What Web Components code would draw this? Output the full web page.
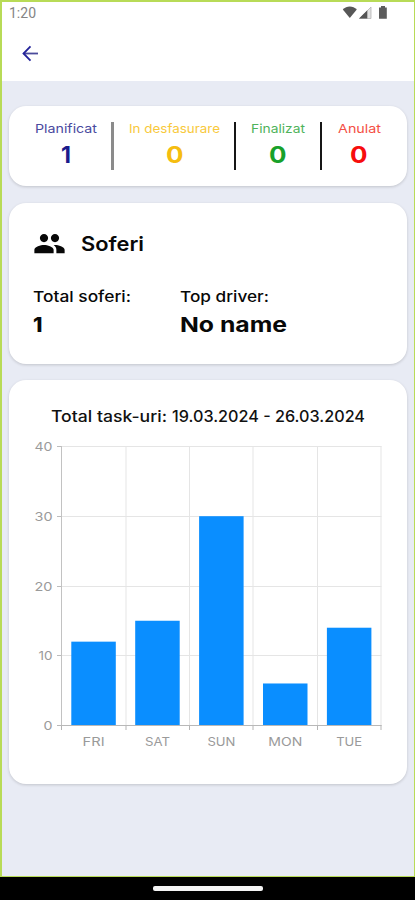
<!DOCTYPE html>
<html lang="ro">
<head>
<meta charset="utf-8">
<title>Soferi</title>
<style>
html,body{margin:0;padding:0;background:#000;font-family:Inter,"Open Sans",sans-serif}
</style>
</head>
<body>
<driver-app></driver-app>
<script>
const define = (name, html, ready) => {
  const template = document.createElement('template');
  template.innerHTML = html;
  customElements.define(name, class extends HTMLElement {
    constructor() {
      super();
      this.attachShadow({mode: 'open'}).append(template.content.cloneNode(true));
    }
    connectedCallback() { if (ready) ready(this, this.shadowRoot); }
  });
};

// One line of text set to a given width, with its baseline at a given height.
define('fit-text', `<style>
:host{display:block}
svg{display:block;overflow:visible}
</style><svg><text lengthAdjust="spacingAndGlyphs" fill="currentColor"></text></svg>`, (el, root) => {
  const svg = root.querySelector('svg'), t = root.querySelector('text');
  const w = el.getAttribute('w'), h = el.getAttribute('h');
  svg.setAttribute('width', w); svg.setAttribute('height', h);
  t.setAttribute('y', el.getAttribute('base') || h);
  t.setAttribute('textLength', w);
  t.setAttribute('font-size', el.getAttribute('size'));
  t.setAttribute('font-weight', el.getAttribute('weight') || 400);
  if (el.hasAttribute('font')) t.setAttribute('font-family', el.getAttribute('font'));
  t.textContent = el.getAttribute('text');
});

define('status-bar', `<style>
:host{display:flex;height:22px;padding:0 26px 0 7px;justify-content:space-between;color:#858585}
fit-text{margin-top:5px}
svg{display:block;margin-top:3px}
</style>
<fit-text text="1:20" w="27" h="12" base="11.3" size="14" font="Roboto, sans-serif"></fit-text>
<svg width="46" height="15" viewBox="0 0 46 15">
<path d="M.8 4.6C4.6.3 11 .3 14.8 4.6L7.8 13Z" fill="#575757"/>
<path d="M17.5 13.5 29 2v11.500Z" fill="#e2e2e2" stroke="#b4b4b4" stroke-width=".8"/>
<path d="M17 13.500 25.300 5.300v8.200Z" fill="#555"/>
<path d="M39 1h4v1.500h1.800v11.300h-7.800V2.500H39Z" fill="#5c5c5c"/>
</svg>`);

define('app-header', `<style>
:host{display:flex;flex-direction:column;height:79px;background:#fff}
nav{display:flex;align-items:center;height:57px;padding:1px 0 0 19px;box-sizing:border-box}
</style><status-bar></status-bar>
<nav><svg width="17" height="17" viewBox="0 0 17 17" fill="none" stroke-width="1.800"><path d="M2.500 8.500H17" stroke="#4b4b9c"/><path d="M9.500 1.400 2.500 8.500l7 7.100" stroke="#23239a"/></svg></nav>`);

define('ui-card', `<style>
:host{display:block;box-sizing:border-box;background:#fff;border-radius:17px;box-shadow:0 1px 3px #0000002b}
</style><slot></slot>`);

define('stat-item', `<style>
:host{display:flex;flex-direction:column;align-items:center;gap:11px}
</style><slot></slot>`);

define('stat-row', `<style>
:host{display:grid;grid-template-columns:105px 122px 86px 1fr;height:48px;padding-top:16px}
stat-item{padding-top:2.500px;box-sizing:border-box}
.line{border-right:2px solid #161616}
.a{color:#4a4aa0;border-right:3px solid #8b8b8b;padding-left:11px}
.b{color:#f8c93c;padding-left:1px}.c{color:#4fb35b}.d{color:#f44f45;padding-right:11px}
.n1{color:#1b1b8b}.n2{color:#f5bd10}.n3{color:#17a12b}.n4{color:#f70d0d}
</style>
<stat-item class="a"><fit-text text="Planificat" w="62" h="10" base="9.2" size="12"></fit-text><fit-text class="n1" text="1" w="10" h="18" base="17.500" size="23" weight="700"></fit-text></stat-item>
<stat-item class="b line"><fit-text text="In desfasurare" w="91" h="10" base="9.2" size="12"></fit-text><fit-text class="n2" text="0" w="17.500" h="18" base="17.500" size="23" weight="700"></fit-text></stat-item>
<stat-item class="c line"><fit-text text="Finalizat" w="54" h="10" base="9.2" size="12"></fit-text><fit-text class="n3" text="0" w="17.500" h="18" base="17.500" size="23" weight="700"></fit-text></stat-item>
<stat-item class="d"><fit-text text="Anulat" w="43" h="10" base="9.2" size="12"></fit-text><fit-text class="n4" text="0" w="17.500" h="18" base="17.500" size="23" weight="700"></fit-text></stat-item>`);

define('drivers-panel', `<style>
:host{display:block;padding:24px 24px 0;color:#080808}
header{display:flex;align-items:center;gap:15px;height:33px}
header svg{display:block}
section{display:grid;grid-template-columns:147px 1fr;padding-top:30px}
section div{display:flex;flex-direction:column;gap:15px}
</style>
<header><svg width="33" height="33" viewBox="0 0 24 24" fill="#080808"><path d="M16 11c1.660 0 2.990-1.340 2.990-3S17.660 5 16 5s-3 1.340-3 3 1.340 3 3 3zm-8 0c1.660 0 2.990-1.340 2.990-3S9.660 5 8 5 5 6.340 5 8s1.340 3 3 3zm0 2c-2.330 0-7 1.170-7 3.500V19h14v-2.500c0-2.330-4.670-3.500-7-3.500zm8 0c-.29 0-.62.02-.97.05 1.160.84 1.970 1.970 1.970 3.450V19h6v-2.500c0-2.330-4.670-3.500-7-3.500z"/></svg>
<fit-text text="Soferi" w="63" h="15" base="14.800" size="20" weight="600"></fit-text></header>
<section><div><fit-text text="Total soferi:" w="98" h="12" base="12" size="15" weight="500"></fit-text><fit-text text="1" w="9.500" h="15" base="15.200" size="20.500" weight="800"></fit-text></div>
<div><fit-text text="Top driver:" w="89" h="12" base="12" size="15" weight="500"></fit-text><fit-text text="No name" w="107" h="15" base="15.200" size="20.500" weight="700"></fit-text></div></section>`);

define('bar-chart', `<style>
:host{display:block}
svg{display:block}
text{font-size:11.500px;fill:#9a9a9a}
</style><svg width="398" height="330" viewBox="9 430 398 330"></svg>`, (el, root) => {
  const edges = [61.5, 126, 189.5, 253, 317.5, 381], zero = 725, unit = 6.97;
  const data = [['FRI',12,22],['SAT',15,25],['SUN',30,28],['MON',6,34],['TUE',14,26]];
  let out = '';
  for (const v of [0,10,20,30,40]) {
    const y = Math.round(zero - v * unit) + .5;
    out += `<path d="M61 ${y}H381.500" stroke="#e5e5e5"/><path d="M57 ${y}h5" stroke="#bcbcbc"/>`;
    const w = v === 0 ? 9 : v === 10 ? 14 : 18;
    out += `<text x="${52.5 - w}" y="${y + 4}" textLength="${w}" lengthAdjust="spacingAndGlyphs">${v}</text>`;
  }
  for (const x of edges) out += `<path d="M${x} 446V725" stroke="#e5e5e5"/><path d="M${x} 725v5" stroke="#b5b5b5"/>`;
  data.forEach(([day, v, w], i) => {
    const x = 71.3 + i * 63.9, top = zero - v * unit;
    out += `<rect x="${x}" y="${top + .3}" width="44.500" height="${zero - top}" fill="#0a8eff"/>`;
    out += `<text x="${x + 22.3 - w / 2}" y="745.500" textLength="${w}" lengthAdjust="spacingAndGlyphs">${day}</text>`;
  });
  out += '<path d="M61.500 446V726" stroke="#c2c2c2"/><path d="M57 725.500H381.500" stroke="#b8b8b8"/>';
  root.querySelector('svg').innerHTML = out;
});

define('home-bar', `<style>
:host{display:flex;height:23px;background:#000;padding:9px 0 0 153px;box-sizing:border-box}
i{width:110px;height:5px;border-radius:2px;background:#f4f4f4}
</style><i></i>`);

define('driver-app', `<style>
:host{display:flex;flex-direction:column;width:415px;height:900px;overflow:hidden}
.screen{height:877px;box-sizing:border-box;border:solid #b8db57;border-width:2px 1px 1px 2px;background:#e8ebf4}
main{display:flex;flex-direction:column;gap:16px;padding:24.500px 7px 0}
.stats{height:80.500px}.drivers{height:161px;margin-top:1px}.tasks{height:404px;color:#111}
.title{display:flex;gap:5px;padding:31px 0 0 42px;height:50px;box-sizing:border-box}
</style>
<div class="screen"><app-header></app-header><main>
<ui-card class="stats"><stat-row></stat-row></ui-card>
<ui-card class="drivers"><drivers-panel></drivers-panel></ui-card>
<ui-card class="tasks"><div class="title"><fit-text text="Total task-uri:" w="116" h="12" base="11.300" size="15.500" weight="500"></fit-text><fit-text text="19.03.2024 - 26.03.2024" w="193" h="12" base="11.300" size="15.500" weight="500"></fit-text></div><bar-chart></bar-chart></ui-card>
</main></div><home-bar></home-bar>`);
</script>
</body>
</html>
